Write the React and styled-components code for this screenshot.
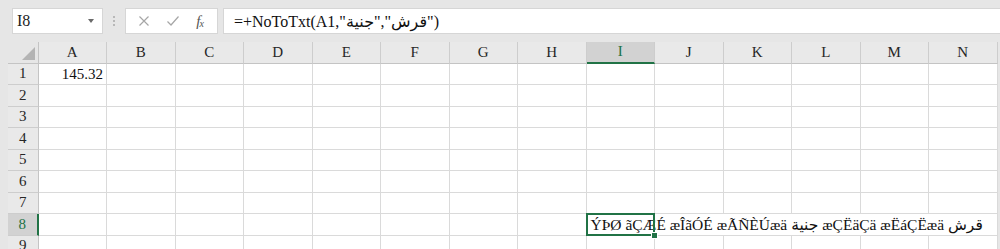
import React from "react";
import styled, {createGlobalStyle} from "styled-components";

const GlobalStyle = createGlobalStyle`
body {
  margin: 0;
  background: #e6e6e6;
  font-family: "Liberation Serif", "DejaVu Sans", serif;
  overflow: hidden;
}
`;

const Shell = styled.div`
width: 1000px;
height: 249px;
overflow: hidden;
display: flex;
flex-direction: column;
background: #e6e6e6;
`;

const FormulaBar = styled.div`
height: 42px;
flex: none;
display: flex;
align-items: flex-start;
padding: 8px 0 0 12px;
box-sizing: border-box;
`;

const NameBox = styled.div`
width: 91px;
height: 26px;
box-sizing: border-box;
background: #fff;
border: 1px solid #d6d6d6;
display: flex;
align-items: center;
justify-content: space-between;
padding: 0 8px 0 4px;
font-family: "Liberation Serif", serif;
font-size: 16px;
color: #222;
`;

const Arrow = styled.span`
width: 0;
height: 0;
border-left: 3.5px solid transparent;
border-right: 3.5px solid transparent;
border-top: 4px solid #6a6a6a;
`;

const Dots = styled.div`
width: 22px;
height: 26px;
display: flex;
flex-direction: column;
align-items: center;
justify-content: center;
gap: 2px;

span {
  width: 2px;
  height: 2px;
  background: #b8b8b8;
}
`;

const IconBox = styled.div`
width: 93px;
height: 26px;
box-sizing: border-box;
background: #fff;
border: 1px solid #d6d6d6;
display: flex;
align-items: center;
justify-content: space-around;
padding: 0 6px 0 4px;
margin-right: 5px;
`;

const Fx = styled.span`
font-family: "Liberation Serif", serif;
font-style: italic;
font-size: 15px;
color: #555;
letter-spacing: -1px;

sub {
  font-size: 10px;
  vertical-align: -1px;
}
`;

const FormulaInput = styled.div`
flex: 1;
height: 26px;
box-sizing: border-box;
background: #fff;
border: 1px solid #d6d6d6;
border-right: none;
display: flex;
align-items: center;
padding-left: 10px;
font-size: 16px;
color: #111;
white-space: nowrap;
`;

const Sheet = styled.div`
flex: 1;
display: grid;
grid-template-columns: 30.5px repeat(14, 68.5px) 1fr;
grid-auto-rows: 21.5px;
padding-left: 8px;
font-family: "Liberation Serif", "DejaVu Sans", serif;
`;

const Corner = styled.div`
position: relative;
background: #e6e6e6;
border-right: 1px solid #c4c4c4;
border-bottom: 1px solid #c4c4c4;
box-sizing: border-box;

&::after {
  content: "";
  position: absolute;
  right: 3px;
  bottom: 3px;
  border-left: 13px solid transparent;
  border-bottom: 13px solid #b4b4b4;
}
`;

const ColHeader = styled.div`
background: ${p => p.$selected ? "#d2d2d2" : "#e9e9e9"};
color: ${p => p.$selected ? "#217346" : "#262626"};
border-right: 1px solid #cdcdcd;
border-bottom: ${p => p.$selected ? "2px solid #217346" : "1px solid #c4c4c4"};
box-sizing: border-box;
display: flex;
align-items: center;
justify-content: center;
font-size: 15px;
`;

const Filler = styled.div`
background: #e6e6e6;
`;

const RowHeader = styled.div`
background: ${p => p.$selected ? "#d2d2d2" : "#e9e9e9"};
color: ${p => p.$selected ? "#217346" : "#262626"};
border-right: ${p => p.$selected ? "2px solid #217346" : "1px solid #c4c4c4"};
border-bottom: 1px solid #cdcdcd;
box-sizing: border-box;
display: flex;
align-items: center;
justify-content: center;
font-size: 15px;
`;

const Cell = styled.div`
position: relative;
background: #fff;
border-right: ${p => p.$spill ? "none" : "1px solid #dadada"};
border-bottom: 1px solid #dadada;
box-sizing: border-box;
display: flex;
align-items: center;
justify-content: ${p => p.$right ? "flex-end" : "flex-start"};
padding: 1px 3px 0 4px;
font-size: ${p => p.$active ? "15.5px" : "15px"};
color: #111;
white-space: nowrap;
z-index: ${p => p.$active ? 2 : "auto"};

${p => p.$active && `
  &::after {
    content: "";
    position: absolute;
    left: -1px;
    top: -1px;
    right: -1px;
    bottom: -1px;
    border: 2px solid #217346;
    pointer-events: none;
  }
  &::before {
    content: "";
    position: absolute;
    right: -4px;
    bottom: -4px;
    width: 5px;
    height: 5px;
    background: #217346;
    border: 1px solid #fff;
    z-index: 3;
  }
`}
`;

const columns = ["A", "B", "C", "D", "E", "F", "G", "H", "I", "J", "K", "L", "M", "N"];
const rows = [1, 2, 3, 4, 5, 6, 7, 8, 9];

const result = "ÝÞØ ãÇÆÉ æÎãÓÉ æÃÑÈÚæä جنية æÇËäÇä æËáÇËæä قرش";

export default function App() {
    return (
        <Shell>
            <GlobalStyle/>
            <FormulaBar>
                <NameBox>I8<Arrow/></NameBox>
                <Dots><span/><span/><span/></Dots>
                <IconBox>
                    <svg width="12" height="12" viewBox="0 0 12 12">
                        <path d="M1.5 1.5 L10.5 10.5 M10.5 1.5 L1.5 10.5" stroke="#a6a6a6" strokeWidth="1.2" fill="none"/>
                    </svg>
                    <svg width="14" height="12" viewBox="0 0 14 12">
                        <path d="M1.5 6.5 L5 10 L12.5 1.5" stroke="#a6a6a6" strokeWidth="1.2" fill="none"/>
                    </svg>
                    <Fx>f<sub>x</sub></Fx>
                </IconBox>
                <FormulaInput>=+NoToTxt(A1,"قرش","جنية")</FormulaInput>
            </FormulaBar>
            <Sheet>
                <Corner/>
                {columns.map(c => <ColHeader key={c} $selected={c === "I"}>{c}</ColHeader>)}
                <Filler/>
                {rows.map(r => (
                    <React.Fragment key={r}>
                        <RowHeader $selected={r === 8}>{r}</RowHeader>
                        {columns.map((c, i) => {
                            if (r === 1 && c === "A")
                                return <Cell key={c} $right>145.32</Cell>;
                            if (r === 8 && c === "I")
                                return <Cell key={c} $active>{result}</Cell>;
                            return <Cell key={c} $spill={r === 8 && i >= 8 && i < 13}/>;
                        })}
                        <Filler/>
                    </React.Fragment>
                ))}
            </Sheet>
        </Shell>
    );
}
